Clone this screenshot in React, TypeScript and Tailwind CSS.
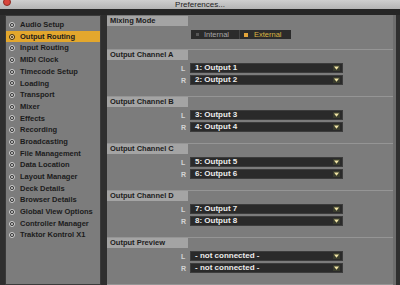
import React from 'react'

const navItems = [
  'Audio Setup',
  'Output Routing',
  'Input Routing',
  'MIDI Clock',
  'Timecode Setup',
  'Loading',
  'Transport',
  'Mixer',
  'Effects',
  'Recording',
  'Broadcasting',
  'File Management',
  'Data Location',
  'Layout Manager',
  'Deck Details',
  'Browser Details',
  'Global View Options',
  'Controller Manager',
  'Traktor Kontrol X1',
]

const channels = [
  { title: 'Output Channel A', l: '1: Output 1', r: '2: Output 2' },
  { title: 'Output Channel B', l: '3: Output 3', r: '4: Output 4' },
  { title: 'Output Channel C', l: '5: Output 5', r: '6: Output 6' },
  { title: 'Output Channel D', l: '7: Output 7', r: '8: Output 8' },
  { title: 'Output Preview', l: '- not connected -', r: '- not connected -' },
]

function Bullet({ active }: { active?: boolean }) {
  return (
    <span
      className={
        'w-[6px] h-[6px] rounded-full border shrink-0 flex items-center justify-center ' +
        (active ? 'border-[#3a2a10] bg-[#f0d8a8]' : 'border-[#d8d8d8] bg-[#2a2a2a]')
      }
    >
      <span className={'w-[2px] h-[2px] rounded-full ' + (active ? 'bg-[#3a2a10]' : 'bg-[#d8d8d8]')} />
    </span>
  )
}

function Dropdown({ side, value }: { side: string; value: string }) {
  return (
    <div className="flex items-center h-[10px]">
      <span className="w-[9px] text-[7px] font-bold text-[#d4d4d4] leading-none">{side}</span>
      <div className="w-[153px] h-[10px] bg-[#2a2a2a] border border-[#3c3c3c] flex items-center justify-between pl-[4px] pr-[2px]">
        <span className="text-[8px] font-bold text-[#ececec] leading-none">{value}</span>
        <span className="w-[7px] h-[6px] bg-[#3a3d2e] flex items-center justify-center">
          <svg width="5" height="4" viewBox="0 0 5 4">
            <path d="M0 0.5 H5 L2.5 3.8 Z" fill="#f0e4a4" />
          </svg>
        </span>
      </div>
    </div>
  )
}

function SectionHeader({ title }: { title: string }) {
  return (
    <div className="border-t border-[#959595] flex">
      <div className="w-[81px] h-[10px] bg-[#a4a4a4] pl-[3px] flex items-center">
        <span className="text-[7.5px] font-bold text-[#1c1c1c] leading-none">{title}</span>
      </div>
    </div>
  )
}

export default function App() {
  return (
    <div
      className="w-[400px] h-[285px] bg-[#2f2f2f] flex flex-col overflow-hidden"
      style={{ fontFamily: '"Liberation Sans", Arial, sans-serif' }}
    >
      {/* Title bar */}
      <div className="relative h-[9px] bg-gradient-to-b from-[#cfcfcf] to-[#b4b4b4] flex items-center justify-center">
        <span className="absolute left-[3px] top-[-2px] w-[8px] h-[8px] rounded-full bg-[#d8443a] border border-[#8a2a22]" />
        <span className="text-[8px] text-[#222] leading-none">Preferences...</span>
      </div>
      <div className="h-[6px] bg-[#262626]" />

      <div className="flex-1 flex gap-[6px] pl-[5px] pr-[4px] min-h-0">
        {/* Sidebar */}
        <aside className="w-[96px] bg-[#7c7c7c] border border-[#3a3a3a] pt-[3px] flex flex-col">
          {navItems.map((item) => {
            const active = item === 'Output Routing'
            return (
              <div
                key={item}
                className={
                  'h-[11.7px] flex items-center gap-[5px] pl-[3px] ' + (active ? 'bg-[#e3a72d]' : '')
                }
              >
                <Bullet active={active} />
                <span className="text-[7.5px] font-bold text-[#1b1b1b] leading-none whitespace-nowrap">
                  {item}
                </span>
              </div>
            )
          })}
        </aside>

        {/* Content */}
        <main className="flex-1 bg-[#7c7c7c] border-r-[3px] border-[#6e6e6e] flex flex-col pt-[1px]">
          <div className="h-[33px]">
            <div className="flex">
              <div className="w-[81px] h-[10px] bg-[#a4a4a4] pl-[3px] flex items-center">
                <span className="text-[7.5px] font-bold text-[#1c1c1c] leading-none">Mixing Mode</span>
              </div>
            </div>
            <div className="flex pl-[84px] mt-[4px]">
              <div className="h-[9px] bg-[#2b2b2b] flex items-center">
                <div className="w-[48px] flex items-center gap-[5px] pl-[5px]">
                  <span className="w-[3px] h-[3px] bg-[#555]" />
                  <span className="text-[7.5px] text-[#a6a6a6] leading-none">Internal</span>
                </div>
                <div className="w-[52px] h-full border-l border-[#444] flex items-center gap-[6px] pl-[4px]">
                  <span className="w-[4px] h-[4px] bg-[#e2a43a]" />
                  <span className="text-[7.5px] text-[#d9b442] leading-none">External</span>
                </div>
              </div>
            </div>
          </div>

          {channels.map((ch) => (
            <div key={ch.title} className="h-[47px]">
              <SectionHeader title={ch.title} />
              <div className="pl-[74px] pt-[3px] flex flex-col gap-[2px]">
                <Dropdown side="L" value={ch.l} />
                <Dropdown side="R" value={ch.r} />
              </div>
            </div>
          ))}
          <div className="border-t border-[#959595]" />
        </main>
      </div>
    </div>
  )
}
